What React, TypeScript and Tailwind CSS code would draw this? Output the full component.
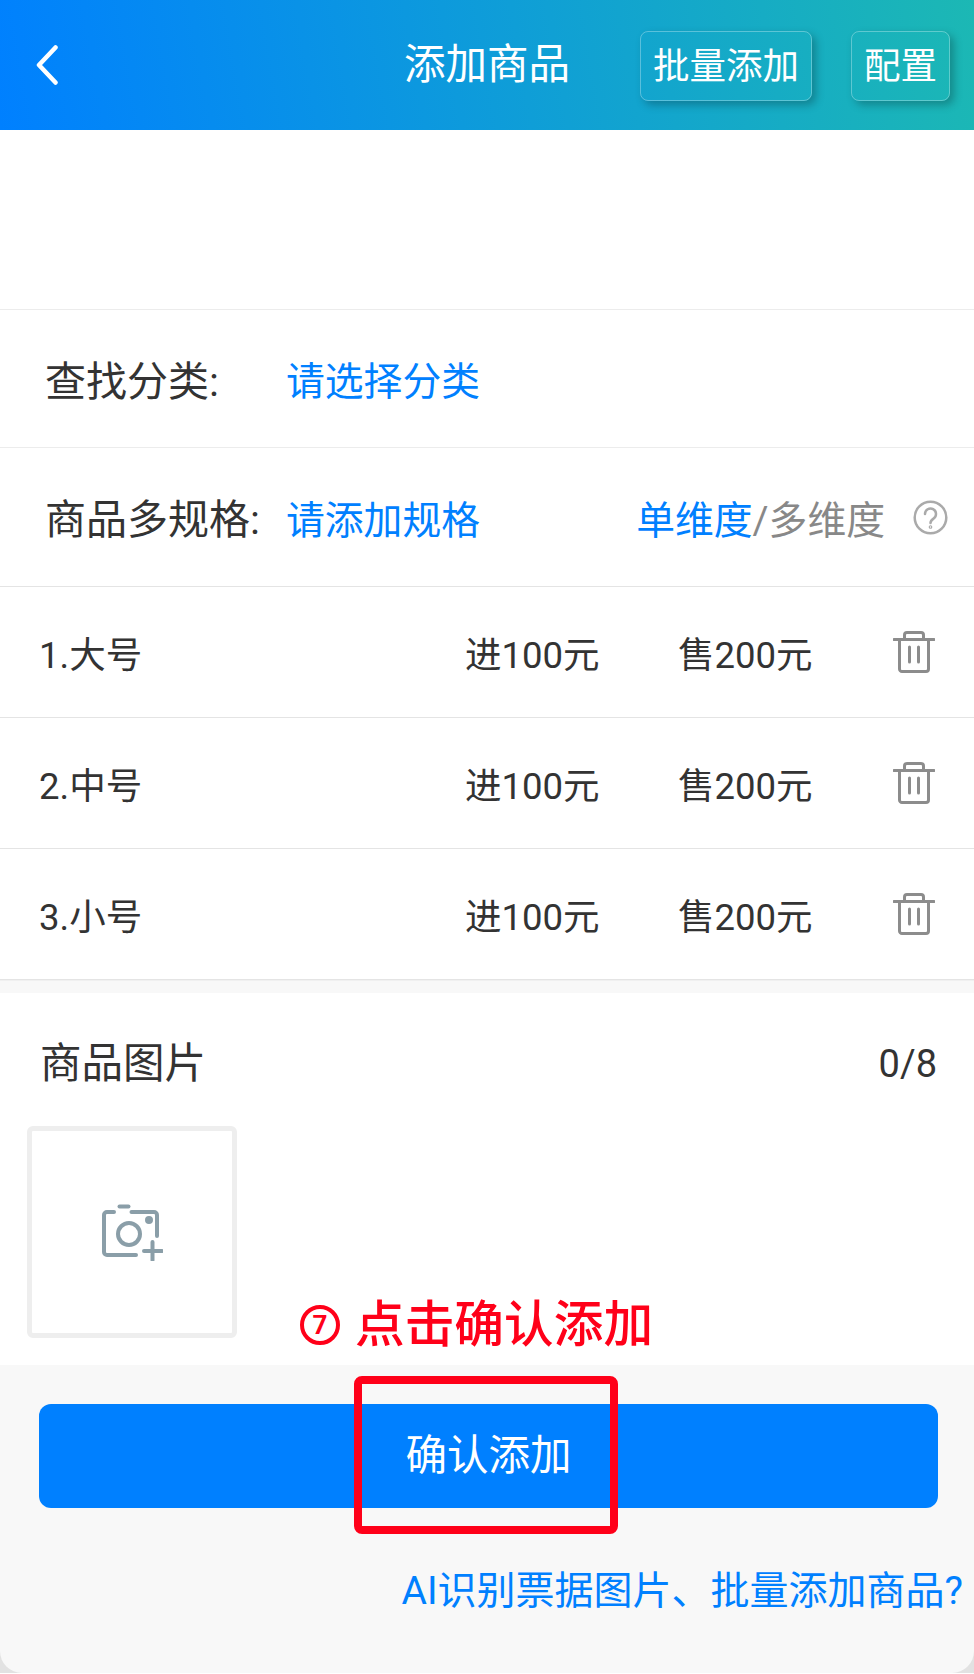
const FONT = 'font-["Roboto","Noto_Sans_CJK_SC",sans-serif]';

const specs = ['1.大号', '2.中号', '3.小号'];

const BackIcon = () => (
  <svg width="22" height="40" viewBox="0 0 22 40" fill="none" stroke="#ffffff" strokeWidth="4.500" strokeLinecap="round" strokeLinejoin="round">
    <path d="M19.500 2.500 3 20l16.500 17.500" />
  </svg>
);

const TrashIcon = () => (
  <svg width="42" height="42" viewBox="0 0 42 42" fill="none" stroke="#8c8c8c" strokeWidth="3" strokeLinecap="round" strokeLinejoin="round">
    <path d="M1 8.500h40" />
    <path d="M11.500 8V4a2.500 2.500 0 0 1 2.500-2.500h14A2.500 2.500 0 0 1 30.500 4v4" />
    <path d="M6.500 9v29a2.500 2.500 0 0 0 2.500 2.500h24a2.500 2.500 0 0 0 2.500-2.500V9" />
    <path d="M16.500 16v15M25.500 16v15" />
  </svg>
);

const CameraIcon = () => (
  <svg width="62" height="57" viewBox="0 0 62 57" fill="none" stroke="#8a9ea8" strokeWidth="4" strokeLinecap="round" strokeLinejoin="round">
    <path d="M18.500 2.500h9" />
    <path d="M13 8H6a3 3 0 0 0-3 3v37a3 3 0 0 0 3 3h29" />
    <path d="M30.500 8H53a3 3 0 0 1 3 3v21" />
    <circle cx="28" cy="30" r="11" />
    <circle cx="48" cy="16" r="2" fill="#8a9ea8" />
    <path d="M43 47h18M51.500 38v18" />
  </svg>
);

const HelpIcon = () => (
  <svg width="35" height="35" viewBox="0 0 35 35" fill="none" stroke="#aaaaaa" strokeWidth="2.500" strokeLinecap="round">
    <circle cx="17.500" cy="17.500" r="15.800" />
    <path d="M12 14a5.500 5.500 0 1 1 8.500 4.600c-2 1.300-3 2.300-3 4.400" />
    <circle cx="17.500" cy="27" r="0.600" />
  </svg>
);

export default function App() {
  return (
    <div className={`relative w-[974px] h-[1674px] overflow-hidden bg-white text-[#333] ${FONT}`}>
      <header className="grid grid-cols-[1fr_auto_1fr] items-center h-[130px] bg-[linear-gradient(80deg,#0080ff,#1cb8b4)] text-white">
        <div className="pl-[36px]">
          <BackIcon />
        </div>
        <h1 className="text-[41.500px] font-normal">添加商品</h1>
        <div className="flex justify-end gap-[39px] pr-6 mt-[2px]">
          <button className="w-[172px] h-[70px] pt-[2px] rounded-lg border border-white/30 text-[36.500px] shadow-[4px_4px_8px_rgba(0,0,0,0.25)]">批量添加</button>
          <button className="w-[99px] h-[70px] pt-[2px] rounded-lg border border-white/30 text-[36.500px] shadow-[4px_4px_8px_rgba(0,0,0,0.25)]">配置</button>
        </div>
      </header>

      <div className="h-[180px] border-b border-[#ececec]" />

      <div className="flex items-center h-[138px] pl-[45px] pt-2 border-b border-[#ececec] text-[38.800px]">
        <span className="w-[241px] text-[41px]">查找分类:</span>
        <span className="text-[#0080ff]">请选择分类</span>
      </div>

      <div className="flex items-center h-[139px] pl-[45px] pr-[26px] border-b border-[#e4e4e4] text-[38.800px]">
        <span className="w-[241px] shrink-0 pt-2 text-[41px] whitespace-nowrap">商品多规格:</span>
        <span className="pt-2 text-[#0080ff]">请添加规格</span>
        <span className="ml-auto pt-2 text-[#888]"><span className="text-[#0080ff]">单维度</span>/多维度</span>
        <span className="ml-[28px]"><HelpIcon /></span>
      </div>

      {specs.map((name) => (
        <div key={name} className="grid grid-cols-[426px_213px_215px_auto] items-center h-[131px] pl-[39px] border-b border-[#e4e4e4] last:border-b-0 text-[36.500px]">
          <span className="pt-2">{name}</span>
          <span className="pt-2">进100元</span>
          <span className="pt-2">售200元</span>
          <TrashIcon />
        </div>
      ))}

      <div className="h-[13px] bg-[#f8f8f8] border-t border-[#f0f0f0]" />

      <section className="h-[372px] pt-[40px]">
        <div className="flex justify-between items-center pl-10 pr-[37px] text-[41.500px]">
          <span>商品图片</span>
          <span className="text-[38px]">0/8</span>
        </div>
        <div className="flex items-center justify-center w-[210px] h-[212px] ml-[27px] mt-[31px] rounded-md border-[5px] border-[#eeeeee]">
          <CameraIcon />
        </div>
      </section>

      <div className="bg-[#e2e2e2]">
        <footer className="h-[308px] pt-[39px] pl-[39px] pr-9 rounded-b-[22px] bg-[#f8f8f8]">
          <button className="w-[899px] h-[104px] rounded-xl bg-[#0080ff] text-white text-[41.500px]">确认添加</button>
          <p className="mt-[54px] -mr-[25px] text-right text-[#0080ff] text-[39px] whitespace-nowrap">AI识别票据图片、批量添加商品?</p>
        </footer>
      </div>

      <div className="absolute left-[300px] top-[1299px] flex items-center gap-[15px] text-[#ff0019] font-medium text-[49.700px] leading-[52px]">
        <span className="flex items-center justify-center w-10 h-10 rounded-full border-[4.500px] border-[#ff0019] text-[26px] font-bold leading-none">7</span>
        <span>点击确认添加</span>
      </div>
      <div className="absolute left-[354px] top-[1376px] w-[264px] h-[158px] rounded-lg border-[8px] border-[#ff0019]" />
    </div>
  );
}
